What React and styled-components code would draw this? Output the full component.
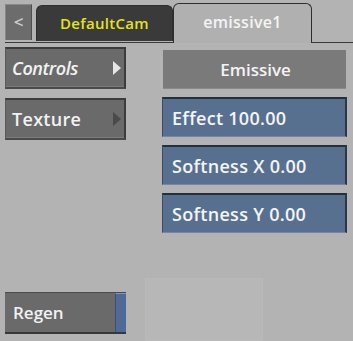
import React from "react";
import styled, { createGlobalStyle } from "styled-components";

const Global = createGlobalStyle`
  html, body { margin: 0; padding: 0; background: #b3b3b3; }
  body { font-family: "Open Sans", "Liberation Sans", Arial, sans-serif; font-weight: 600; }
  * { box-sizing: border-box; }
`;

const Page = styled.div`
  width: 353px;
  height: 341px;
  overflow: hidden;
  background: #b3b3b3;
  display: flex;
  flex-direction: column;
`;

const TabBar = styled.div`
  height: 43px;
  display: flex;
  align-items: flex-end;
  padding-left: 5px;
`;

const BackButton = styled.div`
  width: 27px;
  height: 36px;
  margin-bottom: 2px;
  margin-right: 4px;
  background: #6c6c6c;
  border-top: 1px solid #8a8a8a;
  border-left: 1px solid #858585;
  border-right: 1px solid #4f4f4f;
  color: #cfcfcf;
  font-size: 17px;
  display: flex;
  align-items: center;
  justify-content: center;
  padding-bottom: 2px;
`;

const TabSlot = styled.div`
  height: 43px;
  display: flex;
  align-items: flex-end;
  border-bottom: ${(p) => (p.$active ? "none" : "1.5px solid #3a3a3a")};
`;

const Tab = styled.div`
  width: ${(p) => p.$w}px;
  height: ${(p) => (p.$active ? 40 : 36)}px;
  margin-bottom: ${(p) => (p.$active ? 0 : 1)}px;
  border: 1.5px solid #2e2e2e;
  border-bottom: none;
  border-radius: 6px 6px 0 0;
  background: ${(p) => (p.$active ? "#b0b0b0" : "#3a3a3a")};
  color: ${(p) => (p.$active ? "#f4f4f4" : "#e4e41e")};
  font-size: ${(p) => (p.$active ? 16 : 15)}px;
  display: flex;
  align-items: center;
  justify-content: center;
  padding-bottom: ${(p) => (p.$active ? 3 : 1)}px;
  letter-spacing: 0.3px;
`;

const TabFill = styled.div`
  flex: 1;
  height: 43px;
  border-bottom: 1.5px solid #3a3a3a;
`;

const Body = styled.div`
  display: flex;
  padding: 4px 0 0 5px;
  gap: 36px;
`;

const LeftCol = styled.div`
  width: 121px;
  display: flex;
  flex-direction: column;
  gap: 9px;
`;

const RightCol = styled.div`
  width: 185px;
  margin-top: 3px;
  display: flex;
  flex-direction: column;
  gap: 8px;
`;

const MenuButton = styled.div`
  height: 42px;
  background: #6a6a6a;
  border-top: 2px solid #3c3c3c;
  border-right: 2px solid #3c3c3c;
  border-bottom: 2px solid #4a4a4a;
  border-left: 1px solid #5a5a5a;
  box-shadow: inset 0 -1px 0 #7c7c7c;
  color: #f2f2f2;
  font-size: 18px;
  font-style: ${(p) => (p.$italic ? "italic" : "normal")};
  letter-spacing: ${(p) => (p.$italic ? "-0.4px" : "0.3px")};
  display: flex;
  align-items: center;
  justify-content: space-between;
  padding: 0 3px 1px 6px;
`;

const Arrow = styled.div`
  width: 0;
  height: 0;
  border-top: 7px solid transparent;
  border-bottom: 7px solid transparent;
  border-left: 8px solid ${(p) => (p.$light ? "#e6e6e6" : "#4a4a4a")};
`;

const Header = styled.div`
  height: 39px;
  margin-left: 1px;
  width: 183px;
  background: #7a7a7a;
  border-bottom: 1px solid #8a8a8a;
  color: #f4f4f4;
  font-size: 17px;
  display: flex;
  align-items: center;
  justify-content: center;
  padding-left: 2px;
`;

const Field = styled.div`
  height: 40px;
  background: #587090;
  border-top: 2px solid #24303e;
  border-left: 1px solid #3c4c60;
  border-right: 2px solid #2c3846;
  border-bottom: 1px solid #7088a6;
  color: #f4f4f4;
  font-size: 18px;
  letter-spacing: 0.3px;
  display: flex;
  align-items: center;
  padding: 0 0 0 9px;
`;

const Footer = styled.div`
  margin-top: auto;
  height: 63px;
  display: flex;
  align-items: flex-start;
  padding-left: 5px;
  gap: 19px;
`;

const RegenButton = styled.div`
  margin-top: 14px;
  width: 121px;
  height: 42px;
  display: flex;
  background: #6a6a6a;
  border-top: 1px solid #4a4a4a;
  border-bottom: 2px solid #383838;
  color: #f2f2f2;
  font-size: 17px;
`;

const RegenLabel = styled.div`
  flex: 1;
  display: flex;
  align-items: center;
  padding: 0 0 1px 8px;
`;

const RegenStrip = styled.div`
  width: 11px;
  background: #4f6a96;
  border-left: 1px solid #3c4f70;
  border-top: 1px solid #7d96bc;
`;

const FaintPanel = styled.div`
  width: 118px;
  height: 63px;
  background: #b7b7b7;
  border: 1px solid #b9b9b9;
`;

export default function App() {
  return (
    <Page>
      <Global />
      <TabBar>
        <TabSlot>
          <BackButton>&lt;</BackButton>
          <Tab $w={137}>DefaultCam</Tab>
        </TabSlot>
        <TabSlot $active>
          <Tab $active $w={139}>emissive1</Tab>
        </TabSlot>
        <TabFill />
      </TabBar>
      <Body>
        <LeftCol>
          <MenuButton $italic>
            Controls
            <Arrow $light />
          </MenuButton>
          <MenuButton>
            Texture
            <Arrow />
          </MenuButton>
        </LeftCol>
        <RightCol>
          <Header>Emissive</Header>
          <Field>Effect 100.00</Field>
          <Field>Softness X 0.00</Field>
          <Field>Softness Y 0.00</Field>
        </RightCol>
      </Body>
      <Footer>
        <RegenButton>
          <RegenLabel>Regen</RegenLabel>
          <RegenStrip />
        </RegenButton>
        <FaintPanel />
      </Footer>
    </Page>
  );
}
